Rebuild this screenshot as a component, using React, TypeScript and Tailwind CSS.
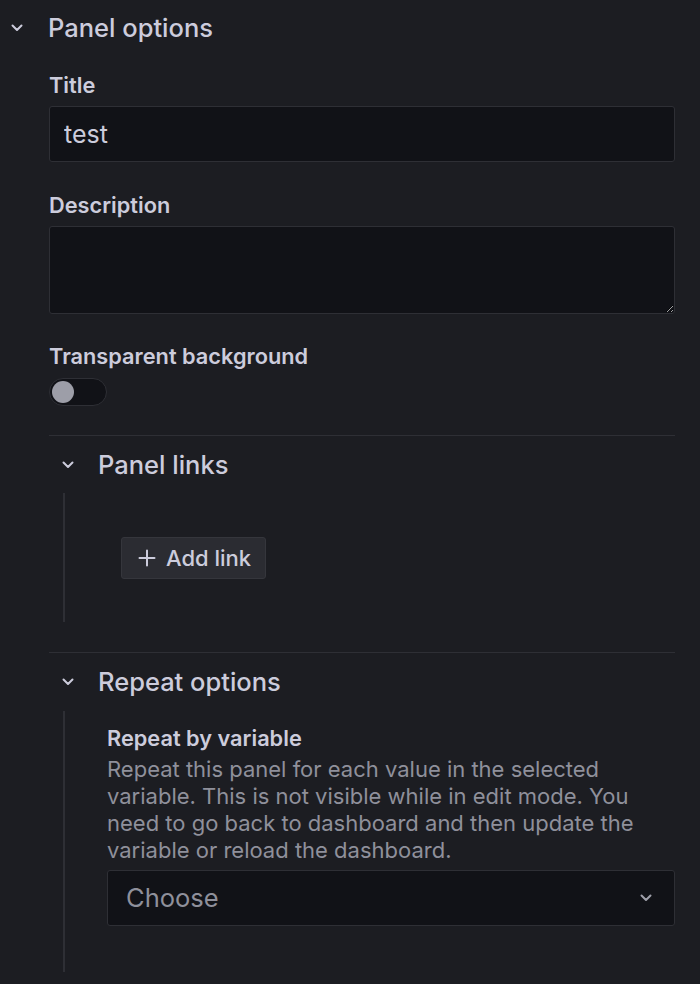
import React from "react";

const Chevron = ({ className = "" }: { className?: string }) => (
  <svg width="12" height="8" viewBox="0 0 12 8" className={className} fill="none">
    <path d="M1.5 1.5 L6 6 L10.5 1.5" stroke="#ccccdc" strokeWidth="2" strokeLinecap="round" strokeLinejoin="round" />
  </svg>
);

export default function App() {
  return (
    <div
      className="w-[700px] h-[984px] overflow-hidden bg-[#1c1d22] text-[#ccccdc]"
      style={{ fontFamily: "Inter, 'Noto Sans', sans-serif" }}
    >
      {/* Panel options header */}
      <div className="h-[56px] flex items-center">
        <div className="w-[48px] flex pl-[11px]">
          <Chevron />
        </div>
        <span className="text-[25.5px] font-medium leading-none">Panel options</span>
      </div>

      <div className="pl-[49px] pr-[25px]">
        <div className="mt-[15px] text-[21.75px] font-semibold leading-[28px]">Title</div>
        <input
          readOnly
          value="test"
          className="mt-[7px] block w-full h-[56px] rounded-[3px] bg-[#111217] border border-[#2e2f35] px-[14px] text-[25px] text-[#ccccdc] outline-none"
          style={{ fontFamily: "Inter, 'Noto Sans', sans-serif" }}
        />

        <div className="mt-[29px] text-[21.75px] font-semibold leading-[28px]">Description</div>
        <textarea
          readOnly
          className="mt-[7px] block w-full h-[88px] rounded-[3px] bg-[#111217] border border-[#2e2f35] outline-none"
        />

        <div className="mt-[28px] text-[21.75px] font-semibold leading-[28px]">Transparent background</div>
        <div className="mt-[8px] w-[58px] h-[28px] rounded-full bg-[#111217] border border-[#2e2f35] flex items-center pl-[2px]">
          <div className="w-[22px] h-[22px] rounded-full bg-[#9d9ea8]" />
        </div>

        <div className="mt-[29px] h-px bg-[#2e2f35]" />

        {/* Panel links */}
        <div className="h-[57px] flex items-center">
          <div className="w-[49px] flex pl-[13px]">
            <Chevron />
          </div>
          <span className="text-[25.5px] font-medium leading-none">Panel links</span>
        </div>
        <div className="ml-[14px] border-l-2 border-[#2e2f35] h-[129px] pt-[44px] pl-[56px]">
          <button className="h-[42px] pl-[16px] pr-[14px] flex items-center gap-[10px] rounded-[3px] bg-[#2b2c32] border border-[#35363c] text-[22px] font-medium text-[#ccccdc]">
            <svg width="18" height="18" viewBox="0 0 18 18" fill="none">
              <path d="M9 1.5V16.5M1.5 9H16.5" stroke="#ccccdc" strokeWidth="2" strokeLinecap="round" />
            </svg>
            Add link
          </button>
        </div>

        <div className="mt-[30px] h-px bg-[#2e2f35]" />

        {/* Repeat options */}
        <div className="h-[58px] flex items-center">
          <div className="w-[49px] flex pl-[13px]">
            <Chevron />
          </div>
          <span className="text-[25.5px] font-medium leading-none">Repeat options</span>
        </div>
        <div className="ml-[14px] border-l-2 border-[#2e2f35] h-[261px] pl-[42px] pt-[13px]">
          <div className="text-[21.75px] font-semibold leading-[28px]">Repeat by variable</div>
          <div className="mt-[4px] text-[22px] leading-[27px] text-[#8f909b]">
            Repeat this panel for each value in the selected variable. This is not visible while in edit mode. You
            need to go back to dashboard and then update the variable or reload the dashboard.
          </div>
          <div className="mt-[6px] h-[56px] rounded-[3px] bg-[#111217] border border-[#2e2f35] flex items-center justify-between pl-[18px] pr-[22px]">
            <span className="text-[25.5px] text-[#8f909b]">Choose</span>
            <svg width="12" height="8" viewBox="0 0 12 8" fill="none">
              <path d="M1.5 1.5 L6 6 L10.5 1.5" stroke="#9fa0aa" strokeWidth="2" strokeLinecap="round" strokeLinejoin="round" />
            </svg>
          </div>
        </div>
      </div>
    </div>
  );
}
